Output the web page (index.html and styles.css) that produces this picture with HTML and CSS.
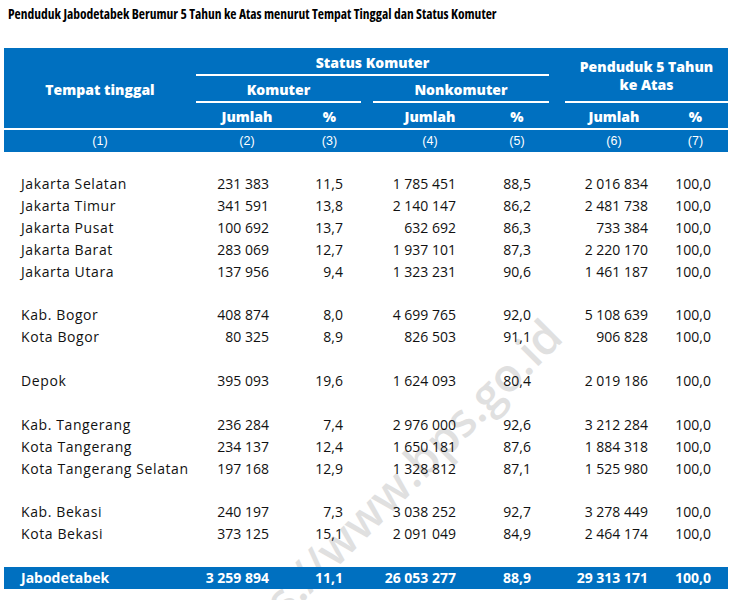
FILE: index.html
```html
<!DOCTYPE html>
<html lang="id">
<head>
<meta charset="utf-8">
<title>Penduduk Jabodetabek Berumur 5 Tahun ke Atas</title>
<link rel="stylesheet" href="styles.css">
</head>
<body>
<h1 class="title">Penduduk Jabodetabek Berumur 5 Tahun ke Atas menurut Tempat Tinggal dan Status Komuter</h1>
<div class="table">
  <div class="head grid">
    <div class="h-place">Tempat tinggal</div>
    <div class="h-status">Status Komuter</div>
    <div class="h-kom">Komuter</div>
    <div class="h-non">Nonkomuter</div>
    <div class="h-pop">Penduduk 5 Tahun<br>ke Atas</div>
    <div class="h-sub k2">Jumlah</div>
    <div class="h-sub k3">%</div>
    <div class="h-sub k4">Jumlah</div>
    <div class="h-sub k5">%</div>
    <div class="h-sub k6">Jumlah</div>
    <div class="h-sub k7">%</div>
  </div>
  <div class="nums grid">
    <div>(1)</div>
    <div class="k2">(2)</div>
    <div class="k3">(3)</div>
    <div class="k4">(4)</div>
    <div class="k5">(5)</div>
    <div class="k6">(6)</div>
    <div class="k7">(7)</div>
  </div>
  <div class="blank"></div>
  <div class="row grid"><span class="name">Jakarta Selatan</span><span class="c2">231 383</span><span class="c3">11,5</span><span class="c4">1 785 451</span><span class="c5">88,5</span><span class="c6">2 016 834</span><span class="c7">100,0</span></div>
  <div class="row grid"><span class="name">Jakarta Timur</span><span class="c2">341 591</span><span class="c3">13,8</span><span class="c4">2 140 147</span><span class="c5">86,2</span><span class="c6">2 481 738</span><span class="c7">100,0</span></div>
  <div class="row grid"><span class="name">Jakarta Pusat</span><span class="c2">100 692</span><span class="c3">13,7</span><span class="c4">632 692</span><span class="c5">86,3</span><span class="c6">733 384</span><span class="c7">100,0</span></div>
  <div class="row grid"><span class="name">Jakarta Barat</span><span class="c2">283 069</span><span class="c3">12,7</span><span class="c4">1 937 101</span><span class="c5">87,3</span><span class="c6">2 220 170</span><span class="c7">100,0</span></div>
  <div class="row grid"><span class="name">Jakarta Utara</span><span class="c2">137 956</span><span class="c3">9,4</span><span class="c4">1 323 231</span><span class="c5">90,6</span><span class="c6">1 461 187</span><span class="c7">100,0</span></div>
  <div class="blank"></div>
  <div class="row grid"><span class="name">Kab. Bogor</span><span class="c2">408 874</span><span class="c3">8,0</span><span class="c4">4 699 765</span><span class="c5">92,0</span><span class="c6">5 108 639</span><span class="c7">100,0</span></div>
  <div class="row grid"><span class="name">Kota Bogor</span><span class="c2">80 325</span><span class="c3">8,9</span><span class="c4">826 503</span><span class="c5">91,1</span><span class="c6">906 828</span><span class="c7">100,0</span></div>
  <div class="blank"></div>
  <div class="row grid"><span class="name">Depok</span><span class="c2">395 093</span><span class="c3">19,6</span><span class="c4">1 624 093</span><span class="c5">80,4</span><span class="c6">2 019 186</span><span class="c7">100,0</span></div>
  <div class="blank"></div>
  <div class="row grid"><span class="name">Kab. Tangerang</span><span class="c2">236 284</span><span class="c3">7,4</span><span class="c4">2 976 000</span><span class="c5">92,6</span><span class="c6">3 212 284</span><span class="c7">100,0</span></div>
  <div class="row grid"><span class="name">Kota Tangerang</span><span class="c2">234 137</span><span class="c3">12,4</span><span class="c4">1 650 181</span><span class="c5">87,6</span><span class="c6">1 884 318</span><span class="c7">100,0</span></div>
  <div class="row grid"><span class="name">Kota Tangerang Selatan</span><span class="c2">197 168</span><span class="c3">12,9</span><span class="c4">1 328 812</span><span class="c5">87,1</span><span class="c6">1 525 980</span><span class="c7">100,0</span></div>
  <div class="blank"></div>
  <div class="row grid"><span class="name">Kab. Bekasi</span><span class="c2">240 197</span><span class="c3">7,3</span><span class="c4">3 038 252</span><span class="c5">92,7</span><span class="c6">3 278 449</span><span class="c7">100,0</span></div>
  <div class="row grid"><span class="name">Kota Bekasi</span><span class="c2">373 125</span><span class="c3">15,1</span><span class="c4">2 091 049</span><span class="c5">84,9</span><span class="c6">2 464 174</span><span class="c7">100,0</span></div>
  <div class="blank"></div>
  <div class="total grid"><span class="name">Jabodetabek</span><span class="c2">3 259 894</span><span class="c3">11,1</span><span class="c4">26 053 277</span><span class="c5">88,9</span><span class="c6">29 313 171</span><span class="c7">100,0</span></div>
</div>
<div class="watermark">https://www.bps.go.id</div>
</body>
</html>
```

FILE: styles.css
```css
html {
  background: #fff;
  overflow: hidden;
}
body {
  margin: 0;
  width: 733px;
  height: 600px;
  overflow: hidden;
  position: relative;
  font-family: "Open Sans", "Liberation Sans", sans-serif;
  color: #111;
}
.title {
  margin: 0 0 24px 0;
  padding: 4px 0 0 8px;
  height: 20px;
  line-height: 20px;
  font-family: "Liberation Sans Narrow", "Open Sans", sans-serif;
  font-stretch: condensed;
  font-weight: 700;
  font-size: 13.5px;
  color: #000;
}
.table {
  margin-left: 4px;
  width: 724px;
}
.grid {
  display: grid;
  grid-template-columns: 192px 102px 69px 120px 70px 106px 65px;
}
.head {
  background: #0070c0;
  color: #fff;
  grid-template-rows: 28px 27px 25px;
  font-weight: 800;
  font-size: 14px;
}
.head > div {
  display: flex;
  align-items: center;
  justify-content: center;
  text-align: center;
  box-sizing: border-box;
  padding-top: 2px;
}
.h-place {
  grid-column: 1;
  grid-row: 1 / 4;
}
.h-status {
  grid-column: 2 / 6;
  grid-row: 1;
  margin-right: 8px;
  border-bottom: 2px solid #fff;
}
.h-kom {
  grid-column: 2 / 4;
  grid-row: 2;
  margin-right: 6px;
  border-bottom: 2px solid #fff;
}
.h-non {
  grid-column: 4 / 6;
  grid-row: 2;
  margin: 0 8px 0 6px;
  border-bottom: 2px solid #fff;
}
.h-pop {
  grid-column: 6 / 8;
  grid-row: 1 / 3;
  margin-left: 8px;
  border-bottom: 2px solid #fff;
  line-height: 18px;
}
.h-sub {
  grid-row: 3;
}
.head .k2 { grid-column: 2; }
.head .k3 { grid-column: 3; padding-right: 6px; }
.head .k4 { grid-column: 4; padding-left: 6px; }
.head .k5 { grid-column: 5; padding-right: 10px; }
.head .k6 { grid-column: 6; padding-left: 8px; }
.head .k7 { grid-column: 7; }

.nums {
  background: #0070c0;
  color: #fff;
  border-top: 2px solid #fff;
  height: 22px;
  align-items: center;
  font-family: "Liberation Sans", sans-serif;
  font-size: 12.5px;
  text-align: center;
}
.nums .k3 { padding-right: 6px; }
.nums .k4 { padding-left: 6px; }
.nums .k5 { padding-right: 10px; }
.nums .k6 { padding-left: 8px; }

.blank {
  height: 21.9px;
}
.nums + .blank {
  height: 21px;
}
.row, .total {
  height: 21.9px;
  line-height: 21.9px;
  font-size: 14px;
  align-items: center;
}
.name {
  padding-left: 17px;
  letter-spacing: 0.6px;
  white-space: nowrap;
}
.c2, .c3, .c4, .c5, .c6, .c7 {
  text-align: right;
  white-space: nowrap;
}
.c2 { padding-right: 29px; }
.c3 { padding-right: 24px; }
.c4 { padding-right: 31px; }
.c5 { padding-right: 26px; }
.c6 { padding-right: 15px; }
.c7 { padding-right: 17px; }

.total {
  background: #0070c0;
  color: #fff;
  font-weight: 700;
  height: 22px;
  line-height: 22px;
}
.total .name {
  letter-spacing: 0;
}

.watermark {
  position: absolute;
  left: 379px;
  top: 500px;
  z-index: -1;
  transform: translate(-50%, -50%) rotate(-45deg);
  white-space: nowrap;
  font-family: "Open Sans", sans-serif;
  font-weight: 600;
  font-size: 46px;
  color: #e0e0e0;
}
```
